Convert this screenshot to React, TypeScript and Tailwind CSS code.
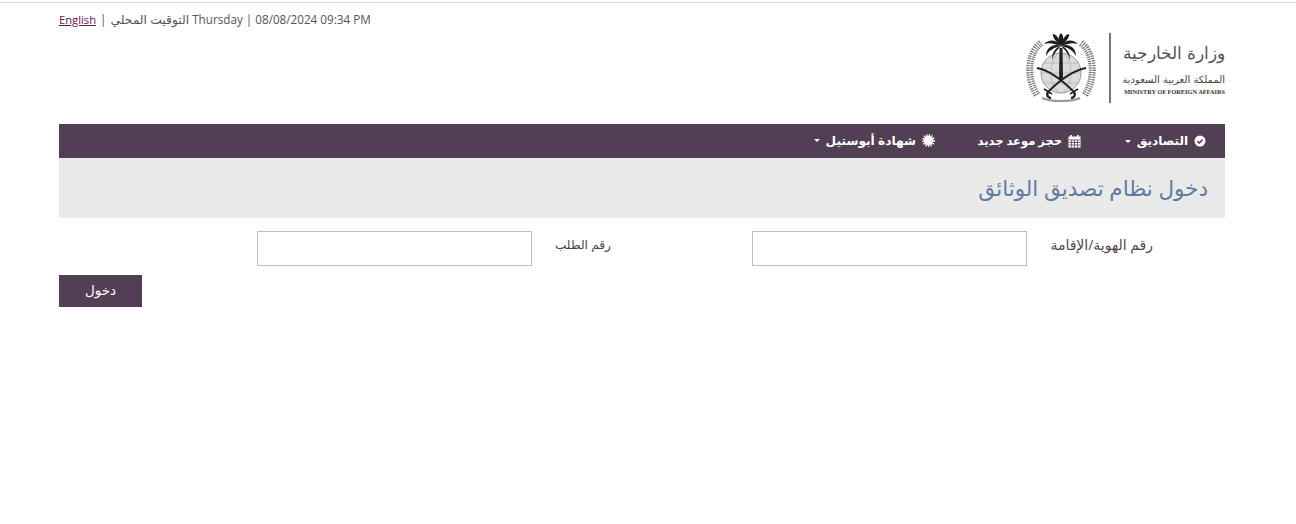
import React from "react";

const fontStack = "font-['Open_Sans','DejaVu_Sans',sans-serif]";

const Emblem = () => (
    <svg width="74" height="72" viewBox="0 0 74 72" fill="none" className="shrink-0">
        {/* wreath */}
        <path d="M17 11 C5 20 1 44 13 63" stroke="#6f6f6f" strokeWidth="7" strokeDasharray="1.2 1.1" />
        <path d="M57 11 C69 20 73 44 61 63" stroke="#6f6f6f" strokeWidth="7" strokeDasharray="1.2 1.1" />
        <path d="M17 11 C5 20 1 44 13 63 M57 11 C69 20 73 44 61 63" stroke="#fff" strokeWidth="1" opacity="0.7" />
        <path d="M18 66 C26 70 48 70 56 66" stroke="#999" strokeWidth="2" />
        {/* globe */}
        <circle cx="37" cy="41" r="20" fill="#dcdcdc" stroke="#999" strokeWidth="1" />
        <ellipse cx="37" cy="41" rx="10" ry="20" stroke="#b5b5b5" strokeWidth="0.8" />
        <path d="M17 41 H57 M20 31 H54 M20 51 H54" stroke="#b5b5b5" strokeWidth="0.8" />
        {/* palm */}
        <path d="M35.5 16 L35 48 L39 48 L38.5 16 Z" fill="#222" />
        <path d="M37 14 C32 7 25 7 20 12 C26 10 31 12 37 14 Z" fill="#1d1d1d" />
        <path d="M37 14 C42 7 49 7 54 12 C48 10 43 12 37 14 Z" fill="#1d1d1d" />
        <path d="M37 14 C30 11 22 15 22 24 C25 18 31 15 37 14 Z" fill="#1d1d1d" />
        <path d="M37 14 C44 11 52 15 52 24 C49 18 43 15 37 14 Z" fill="#1d1d1d" />
        <path d="M37 14 C32 15 28 20 28 28 C30 21 33 18 37 14 Z" fill="#1d1d1d" />
        <path d="M37 14 C42 15 46 20 46 28 C44 21 41 18 37 14 Z" fill="#1d1d1d" />
        <path d="M37 14 C34 9 34 4 37 1 C40 4 40 9 37 14 Z" fill="#1d1d1d" />
        <path d="M37 14 C31 9 28 4 29 2 C34 3 36 9 37 14 Z" fill="#1d1d1d" />
        <path d="M37 14 C43 9 46 4 45 2 C40 3 38 9 37 14 Z" fill="#1d1d1d" />
        {/* swords */}
        <path d="M13 36 C24 38 36 46 50 60" stroke="#222" strokeWidth="1.8" />
        <path d="M62 36 C51 38 38 46 24 60" stroke="#222" strokeWidth="1.8" />
        <path d="M46 62 L54 57 M28 62 L20 57" stroke="#222" strokeWidth="1.5" />
        <path d="M50 60 C52 63 50 66 47 66 M24 60 C22 63 24 66 27 66" stroke="#222" strokeWidth="2.4" />
    </svg>
);

const Logo = () => (
    <div className="flex items-center justify-end h-[70px]">
        <Emblem />
        <div className="w-[2px] h-[70px] bg-[#777] ml-[11px] mr-[12px]" />
        <div className="w-[102px] flex flex-col items-end">
            <div dir="rtl" className="text-[17px] leading-[24px] h-[29px] text-[#555] whitespace-nowrap font-['DejaVu_Serif','Liberation_Serif',serif]">
                وزارة الخارجية
            </div>
            <div dir="rtl" className="text-[10px] leading-[12px] mt-[4px] font-medium text-[#444] whitespace-nowrap font-['DejaVu_Sans',sans-serif]">
                المملكة العربية السعودية
            </div>
            <div className="text-[6.3px] leading-[8px] mt-[2px] font-bold text-[#333] whitespace-nowrap font-['Liberation_Serif',serif]">
                MINISTRY OF FOREIGN AFFAIRS
            </div>
        </div>
    </div>
);

const Caret = () => <span className="inline-block shrink-0 w-0 h-0 border-x-[3px] border-x-transparent border-t-[3px] border-t-white" />;

const CheckIcon = () => (
    <svg width="12" height="12" viewBox="0 0 12 12" className="shrink-0">
        <circle cx="6" cy="6" r="5.5" fill="#fff" />
        <path d="M3.4 6.1 L5.3 8 L8.7 4.5" stroke="#533f55" strokeWidth="1.6" fill="none" />
    </svg>
);

const CalendarIcon = () => (
    <svg width="13" height="13" viewBox="0 0 13 13" className="shrink-0">
        <rect x="0.5" y="1.5" width="12" height="11" fill="#fff" />
        <path d="M3 0 V3 M10 0 V3" stroke="#fff" strokeWidth="1.6" />
        <path d="M1 5 H12 M1 7.5 H12 M1 10 H12 M3.6 5 V12 M6.5 5 V12 M9.4 5 V12" stroke="#533f55" strokeWidth="0.8" />
    </svg>
);

const BadgeIcon = () => (
    <svg width="13" height="13" viewBox="0 0 13 13" className="shrink-0">
        <circle cx="6.5" cy="6.5" r="4.8" fill="#fff" />
        <circle cx="6.5" cy="6.5" r="5.6" fill="none" stroke="#fff" strokeWidth="1.6" strokeDasharray="1.4 1.2" />
    </svg>
);

const navItems = [
    { label: "التصاديق", icon: <CheckIcon />, caret: true, width: "w-[81px]", gap: "ml-[44px]", size: "text-[12px]" },
    { label: "حجز موعد جديد", icon: <CalendarIcon />, caret: false, width: "w-[104px]", gap: "ml-[42px]", size: "text-[11.5px]" },
    { label: "شهادة أبوستيل", icon: <BadgeIcon />, caret: true, width: "w-[120px]", gap: "", size: "text-[12.2px]" },
];

const Field = ({ label, labelClass }: { label: string; labelClass: string }) => (
    <>
        <label className={`${labelClass} shrink-0 leading-[28px] text-[#533f55] whitespace-nowrap`}>{label}</label>
        <input className="w-[275px] h-[35px] shrink-0 border border-[#bdbdbd] bg-white outline-none" />
    </>
);

export default function App() {
    return (
        <div className={`min-h-[522px] bg-white mt-[2px] border-t border-[#d6d6d6] px-[59px] w-[1296px] ${fontStack}`}>
            <div className="w-[1166px]">
                <div className="h-[30px] pt-[7px] text-[11.7px] leading-[18px] text-[#555] whitespace-nowrap">
                    <a className="text-[#5d1a4a] underline text-[11.2px]">English</a>
                    <span className="ml-[1px]"> | </span>
                    <span className="text-[12.3px] ml-[1px]">التوقيت المحلي</span>
                    <span> Thursday | 08/08/2024 09:34 PM</span>
                </div>
                <Logo />
                <nav dir="rtl" className="mt-[21px] h-[34px] bg-[#533f55] flex items-center pr-[19px] text-white">
                    {navItems.map((item) => (
                        <div key={item.label} className={`${item.width} ${item.gap} ${item.size} shrink-0 flex items-center gap-[6px] font-bold whitespace-nowrap`}>
                            {item.icon}
                            <span>{item.label}</span>
                            {item.caret && <Caret />}
                        </div>
                    ))}
                </nav>
                <div dir="rtl" className="h-[60px] bg-[#eaeaea] flex items-center pr-[17px]">
                    <h1 className="text-[21.5px] font-normal text-[#5f7c9e]">دخول نظام تصديق الوثائق</h1>
                </div>
                <div dir="rtl" className="mt-[13px] flex items-start pr-[72px]">
                    <Field label="رقم الهوية/الإقامة" labelClass="w-[126px] text-[14px]" />
                    <div className="w-[141px] shrink-0" />
                    <Field label="رقم الطلب" labelClass="w-[79px] text-[12.2px]" />
                </div>
                <button className="mt-[9px] block w-[83px] h-[32px] pb-[2px] bg-[#533f55] text-white text-[13.5px]">دخول</button>
            </div>
        </div>
    );
}
